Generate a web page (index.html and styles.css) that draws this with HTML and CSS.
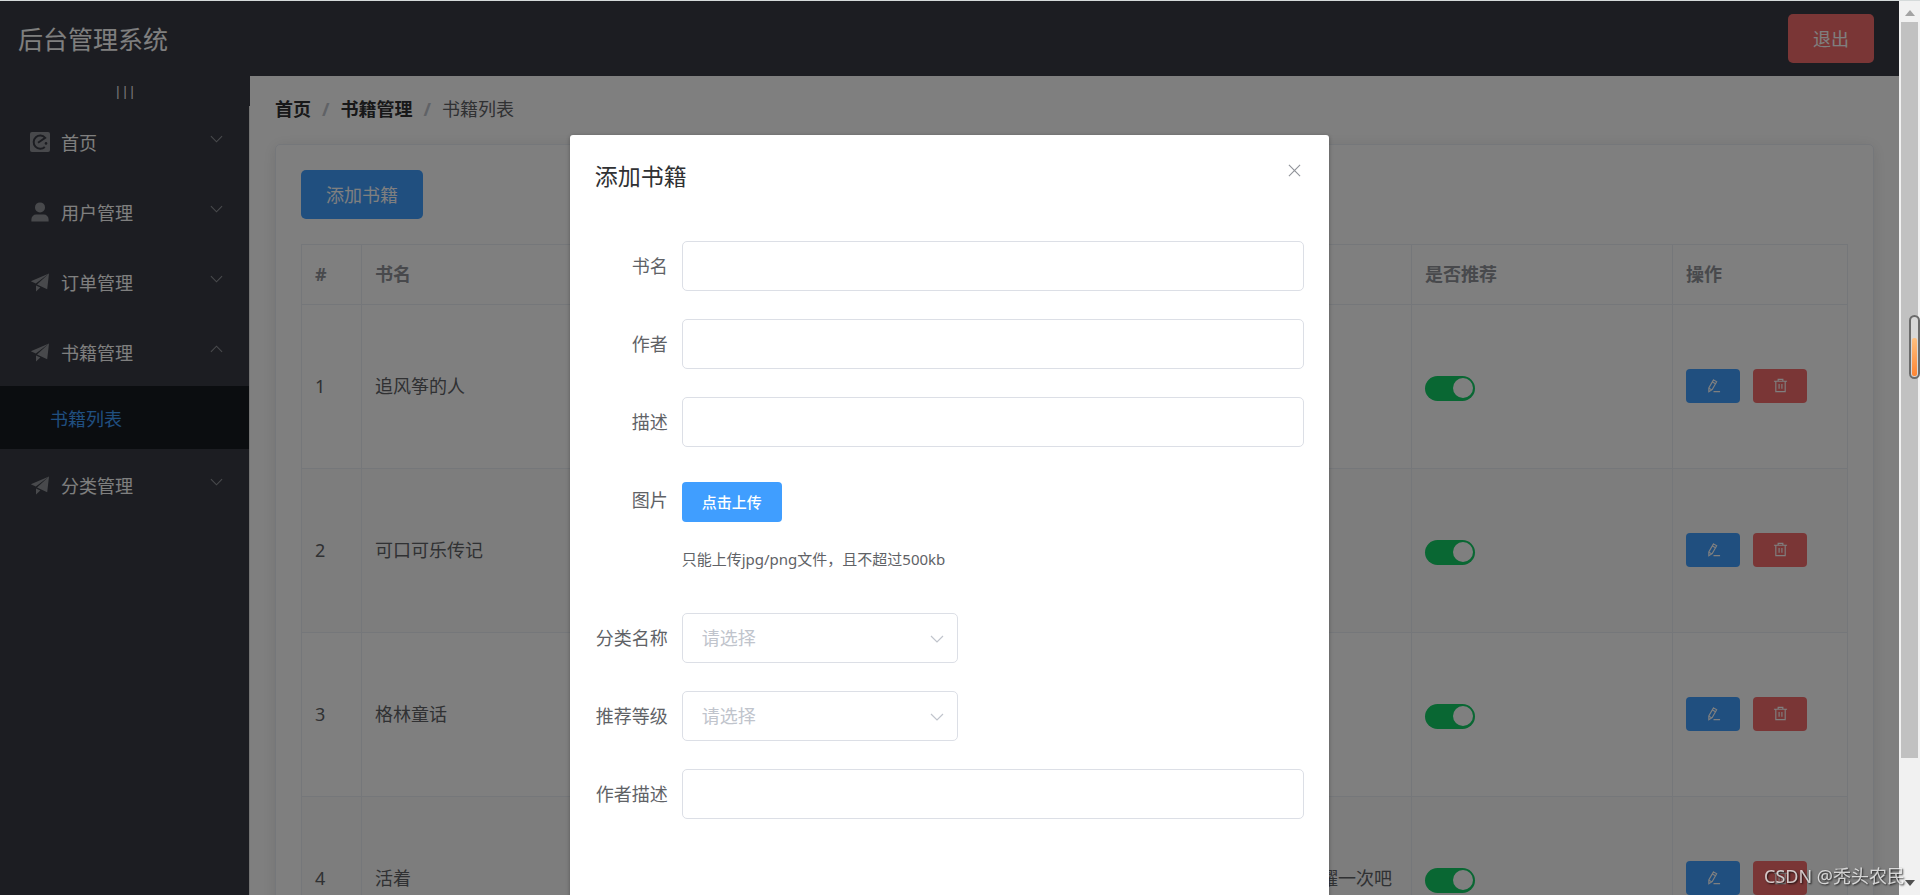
FILE: index.html
```html
<!DOCTYPE html>
<html lang="zh-CN">
<head>
<meta charset="utf-8">
<title>后台管理系统</title>
<link rel="stylesheet" href="styles.css">
</head>
<body>
<svg class="sprite" aria-hidden="true">
  <symbol id="i-eleme" viewBox="0 0 20 20"><rect width="20" height="20" rx="2"/><path d="M14.8 15A6.600 6.600 0 1 1 15.200 5.800L8 10.800" fill="none" stroke="#393b44" stroke-width="2"/><circle cx="16" cy="11.400" r="1.300" fill="#393b44"/></symbol>
  <symbol id="i-user" viewBox="0 0 20 20"><circle cx="10" cy="5.4" r="5"/><path d="M1.4 19.6v-2.2a4.8 4.8 0 0 1 4.8-4.8h7.6a4.8 4.8 0 0 1 4.8 4.8v2.2z"/></symbol>
  <symbol id="i-send" viewBox="0 0 20 20"><path d="M.8 9.300 19 1.500 5.800 11.600zM19 1.500 17.200 17.300 7 12.600zM6 13.600 10.300 15.600 6 19.600z"/></symbol>
  <symbol id="i-down" viewBox="0 0 14 8"><path d="M1 1l6 6 6-6" fill="none" stroke="currentColor" stroke-width="1.2"/></symbol>
  <symbol id="i-up" viewBox="0 0 14 8"><path d="M1 7l6-6 6 6" fill="none" stroke="currentColor" stroke-width="1.2"/></symbol>
  <symbol id="i-edit" viewBox="0 0 16 16"><path d="M8 2l3.400 2-4.800 8.400-3.600 2.200V10.600zM6.800 4.200l3.400 2M3 10.800l3.400 2M8 14.500h7" fill="none" stroke="currentColor" stroke-width="1.200"/></symbol>
  <symbol id="i-trash" viewBox="0 0 16 16"><path d="M1 3.500h14M5.500 3.500v-2h5v2M3 3.500v11h10v-11M6.500 6.500v5M9.500 6.500v5" fill="none" stroke="currentColor" stroke-width="1.200"/></symbol>
  <symbol id="i-close" viewBox="0 0 14 14"><path d="M1 1l12 12M13 1L1 13" fill="none" stroke="currentColor" stroke-width="1.200"/></symbol>
</svg>
<div class="window">
  <div class="app">
    <header class="header">
      <h1 class="brand">后台管理系统</h1>
      <button class="btn btn-danger" type="button">退出</button>
    </header>
    <div class="body">
      <aside class="aside">
        <button class="collapse" type="button">|||</button>
        <nav class="menu">
          <a class="menu-item" href="#"><svg class="menu-icon"><use href="#i-eleme"/></svg><span>首页</span><svg class="caret"><use href="#i-down"/></svg></a>
          <a class="menu-item" href="#"><svg class="menu-icon"><use href="#i-user"/></svg><span>用户管理</span><svg class="caret"><use href="#i-down"/></svg></a>
          <a class="menu-item" href="#"><svg class="menu-icon"><use href="#i-send"/></svg><span>订单管理</span><svg class="caret"><use href="#i-down"/></svg></a>
          <a class="menu-item" href="#"><svg class="menu-icon"><use href="#i-send"/></svg><span>书籍管理</span><svg class="caret"><use href="#i-up"/></svg></a>
          <a class="submenu-item" href="#">书籍列表</a>
          <a class="menu-item" href="#"><svg class="menu-icon"><use href="#i-send"/></svg><span>分类管理</span><svg class="caret"><use href="#i-down"/></svg></a>
        </nav>
      </aside>
      <main class="main">
        <nav class="crumbs"><a href="#">首页</a><span class="sep">/</span><a href="#">书籍管理</a><span class="sep">/</span><span>书籍列表</span></nav>
        <section class="card">
          <button class="btn btn-primary" type="button">添加书籍</button>
          <table class="table">
            <colgroup><col class="c-index"><col class="c-name"><col><col class="c-flag"><col class="c-ops"></colgroup>
            <thead><tr><th>#</th><th>书名</th><th></th><th>是否推荐</th><th>操作</th></tr></thead>
            <tbody>
              <tr><td>1</td><td>追风筝的人</td><td></td><td><input class="switch" type="checkbox" role="switch" aria-label="是否推荐" checked></td><td><div class="ops"><button class="btn-mini btn-primary" type="button" aria-label="编辑"><svg><use href="#i-edit"/></svg></button><button class="btn-mini btn-danger" type="button" aria-label="删除"><svg><use href="#i-trash"/></svg></button></div></td></tr>
              <tr><td>2</td><td>可口可乐传记</td><td></td><td><input class="switch" type="checkbox" role="switch" aria-label="是否推荐" checked></td><td><div class="ops"><button class="btn-mini btn-primary" type="button" aria-label="编辑"><svg><use href="#i-edit"/></svg></button><button class="btn-mini btn-danger" type="button" aria-label="删除"><svg><use href="#i-trash"/></svg></button></div></td></tr>
              <tr><td>3</td><td>格林童话</td><td></td><td><input class="switch" type="checkbox" role="switch" aria-label="是否推荐" checked></td><td><div class="ops"><button class="btn-mini btn-primary" type="button" aria-label="编辑"><svg><use href="#i-edit"/></svg></button><button class="btn-mini btn-danger" type="button" aria-label="删除"><svg><use href="#i-trash"/></svg></button></div></td></tr>
              <tr><td>4</td><td>活着</td><td class="desc">耀一次吧</td><td><input class="switch" type="checkbox" role="switch" aria-label="是否推荐" checked></td><td><div class="ops"><button class="btn-mini btn-primary" type="button" aria-label="编辑"><svg><use href="#i-edit"/></svg></button><button class="btn-mini btn-danger" type="button" aria-label="删除"><svg><use href="#i-trash"/></svg></button></div></td></tr>
            </tbody>
          </table>
        </section>
      </main>
    </div>
    <div class="overlay">
      <div class="dialog" role="dialog" aria-labelledby="dialog-title">
        <div class="dialog-head">
          <h2 class="dialog-title" id="dialog-title">添加书籍</h2>
          <button class="dialog-close" type="button" aria-label="关闭"><svg><use href="#i-close"/></svg></button>
        </div>
        <form class="form">
          <div class="field"><label for="f-name">书名</label><input class="input" id="f-name" type="text"></div>
          <div class="field"><label for="f-author">作者</label><input class="input" id="f-author" type="text"></div>
          <div class="field"><label for="f-desc">描述</label><input class="input" id="f-desc" type="text"></div>
          <div class="field"><label for="f-upload">图片</label>
            <div class="upload"><button class="btn-upload btn-primary" id="f-upload" type="button">点击上传</button><p class="tip">只能上传jpg/png文件，且不超过500kb</p></div>
          </div>
          <div class="field"><label for="f-cate">分类名称</label><div class="select"><select id="f-cate"><option>请选择</option></select><svg><use href="#i-down"/></svg></div></div>
          <div class="field"><label for="f-level">推荐等级</label><div class="select"><select id="f-level"><option>请选择</option></select><svg><use href="#i-down"/></svg></div></div>
          <div class="field"><label for="f-bio">作者描述</label><input class="input" id="f-bio" type="text"></div>
        </form>
      </div>
    </div>
  </div>
  <div class="scrollbar" aria-hidden="true">
    <svg class="arrow arrow-up" viewBox="0 0 10 6"><path d="M0 6l5-6 5 6z"/></svg>
    <div class="thumb"></div>
    <svg class="arrow" viewBox="0 0 10 6"><path d="M0 0l5 6 5-6z"/></svg>
  </div>
</div>
<div class="meter" aria-hidden="true"><div class="meter-fill"></div></div>
<div class="watermark">CSDN @秃头农民</div>
</body>
</html>
```
FILE: styles.css
```css
* { box-sizing: border-box; }
body {
  margin: 0;
  height: 100vh;
  overflow: hidden;
  border-top: 1px solid #d5dada;
  font: 18px/24px "Noto Sans", "Noto Sans CJK SC", sans-serif;
  color: #606266;
}
button, input, select { font: inherit; }
a { color: inherit; text-decoration: none; }
h1, h2, p { margin: 0; font-weight: 400; }
.sprite { display: none; }

.window { display: flex; height: 100%; }
.app {
  position: relative;
  flex: 1;
  min-width: 0;
  display: flex;
  flex-direction: column;
  overflow: hidden;
  background: #fff;
}

/* header */
.header {
  flex: none;
  display: flex;
  align-items: center;
  justify-content: space-between;
  height: 75px;
  padding: 0 25px 0 18px;
  background: #393b44;
  color: #fff;
}
.brand { font-size: 25px; line-height: 36px; }
.btn {
  height: 49px;
  padding: 0 25px;
  border: 0;
  border-radius: 5px;
  color: #fff;
}
.btn-primary { background: #409eff; color: #fff; }
.btn-danger { background: #f56c6c; color: #fff; }

/* sidebar */
.body { flex: 1; display: flex; min-height: 0; }
.aside { flex: none; width: 250px; background: #393b44; color: #fff; display: flex; flex-direction: column; }
.collapse {
  height: 30px;
  padding: 0;
  border: 0;
  background: none;
  color: #fff;
  font-size: 13px;
  line-height: 30px;
}
.menu { flex: 1; border-right: 1px solid #e6e6e6; }
.menu-item { display: flex; align-items: center; height: 70px; padding: 0 26px 0 30px; }
.menu-item span { flex: 1; padding-top: 4px; }
.menu-icon { width: 20px; height: 20px; margin: 2px 11px 0 0; fill: #909399; }
.caret { width: 13px; height: 8px; margin-bottom: 4px; color: #909399; }
.submenu-item {
  display: flex;
  align-items: center;
  height: 63px;
  padding: 3px 0 0 50px;
  background: #161a20;
  color: #409eff;
}

/* content */
.main { flex: 1; min-width: 0; padding: 21px 25px; }
.crumbs { display: flex; margin-bottom: 22px; line-height: 25px; }
.crumbs a { font-weight: 700; color: #303133; }
.sep { margin: 0 11px; font-weight: 700; color: #c0c4cc; }
.card {
  padding: 25px;
  border: 1px solid #ebeef5;
  border-radius: 5px;
  box-shadow: 0 2px 15px rgba(0, 0, 0, .1);
}
.table {
  width: 100%;
  margin-top: 25px;
  table-layout: fixed;
  border-collapse: separate;
  border-spacing: 0;
  border-left: 1px solid #ebeef5;
  border-top: 1px solid #ebeef5;
}
.c-index { width: 60px; }
.c-name { width: 240px; }
.c-flag { width: 261px; }
.c-ops { width: 175px; }
.table th, .table td {
  padding: 0 13px 2px;
  border-right: 1px solid #ebeef5;
  border-bottom: 1px solid #ebeef5;
  text-align: left;
}
.table th { height: 60px; color: #909399; }
.table td { height: 164px; }
.table th:nth-child(2), .table td:nth-child(2) { border-right: 0; }
.table tbody tr:nth-child(even) { background: #fafafa; }
.table .desc { padding-right: 19px; text-align: right; }
.switch {
  display: block;
  width: 50px;
  height: 25px;
  margin: 5px 0 0;
  padding: 2px;
  appearance: none;
  border-radius: 13px;
  background: #13ce66;
}
.switch::before {
  content: "";
  display: block;
  width: 20px;
  height: 20px;
  margin-left: auto;
  border-radius: 50%;
  background: #fff;
}
.ops { display: flex; gap: 13px; }
.btn-mini {
  display: flex;
  align-items: center;
  justify-content: center;
  width: 54px;
  height: 34px;
  padding: 0;
  border: 0;
  border-radius: 4px;
}
.btn-mini svg { width: 15px; height: 15px; }

/* dialog */
.overlay { position: absolute; inset: 0; background: rgba(0, 0, 0, .5); }
.dialog {
  width: 40%;
  margin: 15vh auto 0;
  border-radius: 3px;
  background: #fff;
  box-shadow: 0 1px 4px rgba(0, 0, 0, .3);
}
.dialog-head { display: flex; justify-content: space-between; padding: 25px 25px 12px; }
.dialog-title { font-size: 23px; line-height: 32px; color: #303133; }
.dialog-close { width: 20px; height: 20px; padding: 0; border: 0; background: none; color: #909399; display: flex; align-items: center; justify-content: center; }
.dialog-close svg { width: 13px; height: 13px; }
.form { display: flex; flex-direction: column; gap: 28px; padding: 37px 25px 100px; }
.field { display: flex; }
.field label { flex: none; width: 87px; padding-right: 14px; line-height: 50px; text-align: right; white-space: nowrap; }
.input {
  flex: 1;
  min-width: 0;
  height: 50px;
  padding: 0 19px;
  border: 1px solid #dcdfe6;
  border-radius: 5px;
  background: #fff;
  color: #606266;
}
.upload { height: 110px; padding-top: 7px; font-size: 15px; }
.btn-upload { display: block; width: 100px; height: 40px; padding: 0; border: 0; border-radius: 4px; font-weight: 500; }
.tip { margin-top: 25px; line-height: 24px; }
.select { position: relative; width: 276px; }
.select select {
  width: 100%;
  height: 50px;
  padding: 0 38px 0 19px;
  appearance: none;
  border: 1px solid #dcdfe6;
  border-radius: 5px;
  background: #fff;
  color: #c0c4cc;
}
.select svg { position: absolute; right: 14px; top: 22px; width: 14px; height: 8px; color: #c0c4cc; pointer-events: none; }

/* window scrollbar */
.scrollbar {
  flex: none;
  width: 21px;
  display: flex;
  flex-direction: column;
  align-items: center;
  padding: 9px 0;
  background: #f1f1f1;
}
.arrow { width: 10px; height: 6px; fill: #505050; }
.arrow-up { fill: #a3a3a3; }
.thumb { width: 17px; height: 84%; margin: 6px 0 auto; background: #c1c1c1; }

.meter {
  position: fixed;
  right: 0;
  top: 315px;
  display: flex;
  align-items: flex-end;
  width: 11px;
  height: 64px;
  padding: 1px;
  border: 2px solid #6b6b6b;
  border-radius: 6px;
  background: #d8d8d8;
}
.meter-fill { width: 100%; height: 38px; border-radius: 2px; background: linear-gradient(#ffc080, #ff8533); }
.watermark {
  position: fixed;
  right: 15px;
  bottom: 7px;
  color: rgba(255, 255, 255, .75);
  text-shadow: 1px 1px 2px rgba(0, 0, 0, .8);
}
```
